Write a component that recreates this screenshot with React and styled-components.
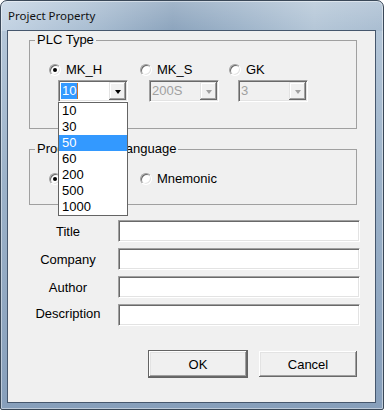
import styled, { createGlobalStyle } from "styled-components"

const GlobalStyle = createGlobalStyle`
  body {
    margin: 0;
    font-family: "Liberation Sans", Arial, sans-serif;
    font-size: 13px;
    color: #000;
  }
`;

const Window = styled.div`
  width: 384px;
  height: 410px;
  box-sizing: border-box;
  display: flex;
  flex-direction: column;
  padding: 0 7px 6px 6px;
  border: 1px solid #3a4858;
  border-radius: 7px 7px 2px 2px;
  background:
    linear-gradient(180deg, rgba(255,255,255,0.2) 0%, rgba(255,255,255,0) 30px) no-repeat,
    linear-gradient(90deg, #c3d3e3 0%, #abbfd3 22%, #8ca4bd 45%, #9db3c9 62%, #b4c6d7 82%, #a9bdd1 100%) 0 0 / 100% 30px no-repeat,
    linear-gradient(180deg, #b9cadb 0%, #9cb2c9 45%, #879fbb 100%);
  box-shadow: inset 0 0 0 1px rgba(255,255,255,0.45);
`;

const TitleBar = styled.div`
  height: 29px;
  display: flex;
  align-items: center;
  padding-left: 1px;
  font-family: "Noto Sans", "Open Sans", sans-serif;
  font-size: 11.5px;
  color: #111;
`;

const Client = styled.div`
  flex: 1;
  display: flex;
  flex-direction: column;
  background: #f0f0f0;
  border: 1px solid #46576d;
`;

const Group = styled.fieldset`
  margin: ${p => p.$top}px 18px 0 21px;
  padding: 15px 0 ${p => p.$bottom}px 19px;
  border: 1px solid #a0a0a0;
  min-width: 0;
`;

const Legend = styled.legend`
  margin-left: -14px;
  padding: 0 2px;
  line-height: 14px;
  font-size: 13px;
`;

const OptionGrid = styled.div`
  display: grid;
  grid-template-columns: 91px 89px auto;
  row-gap: 3px;
`;

const RadioOption = styled.label`
  display: flex;
  align-items: center;
  gap: 5px;
  height: 15px;
  line-height: 15px;
`;

const Radio = styled.span`
  position: relative;
  width: 12px;
  height: 12px;
  box-sizing: border-box;
  border-radius: 50%;
  background: #fff;
  border: 1px solid;
  border-color: #a0a0a0 #fff #fff #a0a0a0;
  box-shadow: inset 1px 1px 0 #696969, inset -1px -1px 0 #e3e3e3;

  &::after {
    content: "";
    display: ${p => (p.$checked ? "block" : "none")};
    position: absolute;
    left: 3px;
    top: 3px;
    width: 4px;
    height: 4px;
    border-radius: 50%;
    background: #000;
  }
`;

const Combo = styled.div`
  position: relative;
  margin-left: 9px;
  width: 70px;
  height: 22px;
  box-sizing: border-box;
  display: flex;
  align-items: center;
  border: 1px solid;
  border-color: #a0a0a0 #fff #fff #a0a0a0;
  box-shadow: inset 1px 1px 0 #696969, inset -1px -1px 0 #e3e3e3;
  background: ${p => (p.$disabled ? "#f0f0f0" : "#fff")};
  color: ${p => (p.$disabled ? "#a0a0a0" : "#000")};
`;

const ComboText = styled.span`
  flex: 1;
  padding-left: 2px;
  line-height: 16px;
`;

const Selected = styled.span`
  background: #3399ff;
  color: #fff;
  padding: 0 1px;
  display: inline-block;
  box-shadow: 1px 0 0 #c8742c;
`;

const DropButton = styled.span`
  width: 17px;
  height: 18px;
  margin-right: 1px;
  box-sizing: border-box;
  display: flex;
  align-items: center;
  justify-content: center;
  background: #f0f0f0;
  box-shadow: inset -1px -1px 0 #696969, inset 1px 1px 0 #e3e3e3, inset -2px -2px 0 #a0a0a0, inset 2px 2px 0 #fff;

  &::after {
    content: "";
    border-left: 3.5px solid transparent;
    border-right: 3.5px solid transparent;
    border-top: 4px solid ${p => (p.$disabled ? "#a0a0a0" : "#000")};
    margin-top: 1px;
  }
`;

const DropList = styled.ul`
  position: absolute;
  top: calc(100% + 1px);
  left: -1px;
  width: 70px;
  box-sizing: border-box;
  margin: 0;
  padding: 0;
  list-style: none;
  background: #fff;
  border: 1px solid #646464;
  z-index: 5;
`;

const DropItem = styled.li`
  height: 16px;
  line-height: 16px;
  padding-left: 3px;
  background: ${p => (p.$active ? "#3399ff" : "transparent")};
  color: ${p => (p.$active ? "#fff" : "#000")};
`;

const FormGrid = styled.div`
  display: grid;
  grid-template-columns: 80px 1fr;
  column-gap: 10px;
  row-gap: 6px;
  margin: 15px 15px 0 20px;
`;

const FieldLabel = styled.span`
  display: flex;
  align-items: center;
  justify-content: center;
  margin-top: ${p => p.$shift || 0}px;
`;

const TextBox = styled.div`
  height: 22px;
  box-sizing: border-box;
  background: #fff;
  border: 1px solid;
  border-color: #a0a0a0 #fff #fff #a0a0a0;
  box-shadow: inset 1px 1px 0 #696969, inset -1px -1px 0 #e3e3e3;
`;

const ButtonRow = styled.div`
  display: flex;
  justify-content: flex-end;
  gap: 10px;
  margin: 24px 17px 0 0;
`;

const Button = styled.button`
  width: 100px;
  height: 28px;
  box-sizing: border-box;
  font-family: inherit;
  font-size: 13px;
  color: #000;
  background: #f0f0f0;
  border: 1px solid ${p => (p.$default ? "#646464" : "#f0f0f0")};
  box-shadow: inset -1px -1px 0 #696969, inset 1px 1px 0 #fff, inset -2px -2px 0 #a0a0a0, inset 2px 2px 0 #e3e3e3;
  padding: 0;
`;

const plcOptions = ["10", "30", "50", "60", "200", "500", "1000"];
const fields = ["Title", "Company", "Author", "Description"];

const App = () => {
  return (
    <>
      <GlobalStyle />
      <Window>
        <TitleBar>Project Property</TitleBar>
        <Client>
          <Group $top={2} $bottom={26}>
            <Legend>PLC Type</Legend>
            <OptionGrid>
              <RadioOption><Radio $checked />MK_H</RadioOption>
              <RadioOption><Radio />MK_S</RadioOption>
              <RadioOption><Radio />GK</RadioOption>
              <Combo>
                <ComboText><Selected>10</Selected></ComboText>
                <DropButton />
                <DropList>
                  {plcOptions.map(o => (
                    <DropItem key={o} $active={o === "50"}>{o}</DropItem>
                  ))}
                </DropList>
              </Combo>
              <Combo $disabled>
                <ComboText>200S</ComboText>
                <DropButton $disabled />
              </Combo>
              <Combo $disabled>
                <ComboText>3</ComboText>
                <DropButton $disabled />
              </Combo>
            </OptionGrid>
          </Group>
          <Group $top={13} $bottom={18}>
            <Legend>Programming Language</Legend>
            <OptionGrid>
              <RadioOption><Radio $checked />Ladder</RadioOption>
              <RadioOption><Radio />Mnemonic</RadioOption>
            </OptionGrid>
          </Group>
          <FormGrid>
            {fields.map(f => (
              <>
                <FieldLabel key={f + "l"} $shift={f === "Description" ? -4 : 0}>{f}</FieldLabel>
                <TextBox key={f + "t"} />
              </>
            ))}
          </FormGrid>
          <ButtonRow>
            <Button $default>OK</Button>
            <Button>Cancel</Button>
          </ButtonRow>
        </Client>
      </Window>
    </>
  )
}

export default App
